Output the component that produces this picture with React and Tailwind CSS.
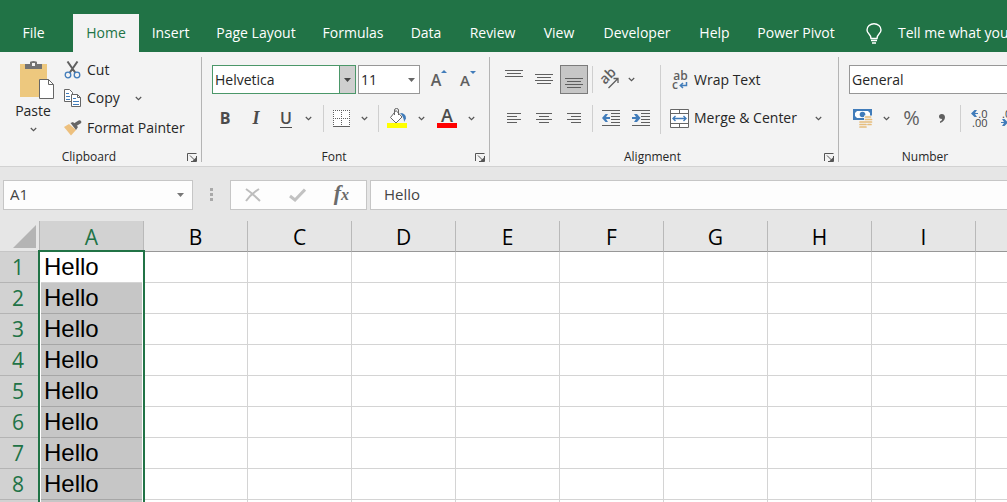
import React, { useState } from 'react';

const tabs = [
  { name: 'Insert', width: 'w-[63px]' },
  { name: 'Page Layout', width: 'w-[108px]' },
  { name: 'Formulas', width: 'w-[86px]' },
  { name: 'Data', width: 'w-[60px]' },
  { name: 'Review', width: 'w-[73px]' },
  { name: 'View', width: 'w-[60px]' },
  { name: 'Developer', width: 'w-[96px]' },
  { name: 'Help', width: 'w-[59px]' },
  { name: 'Power Pivot', width: 'w-[104px]' },
];

const columns = ['A', 'B', 'C', 'D', 'E', 'F', 'G', 'H', 'I', 'J'];
const rows = [1, 2, 3, 4, 5, 6, 7, 8, 9];

function Chevron() {
  return (
    <svg className="shrink-0" width="7" height="5" viewBox="0 0 7 5" fill="none" stroke="#555" strokeWidth="1.2">
      <path d="M.8 1l2.700 2.600L6.200 1" />
    </svg>
  );
}

function Triangle({ color = '#666' }) {
  return (
    <svg width="7" height="4" viewBox="0 0 7 4" fill={color}>
      <path d="M0 0h7L3.500 4z" />
    </svg>
  );
}

function MoreButton({ label, width = 'w-5' }) {
  return (
    <button aria-label={label} className={`flex h-[30px] shrink-0 items-center justify-center ${width}`}>
      <Chevron />
    </button>
  );
}

function IconButton({ label, width = 'w-[30px]', children }) {
  return (
    <button aria-label={label} className={`flex h-[30px] shrink-0 items-center justify-center ${width}`}>
      {children}
    </button>
  );
}

function Separator() {
  return <div className="h-[27px] w-px shrink-0 bg-[#cfcfcf]" />;
}

// horizontal strokes, each one is [x, y, length]
function Lines({ width = 18, height = 18, lines, children }) {
  return (
    <svg width={width} height={height} viewBox={`0 0 ${width} ${height}`} fill="#5f5f5f">
      {lines.map(([x, y, w]) => (
        <rect key={`${x}-${y}`} x={x} y={y} width={w} height="1" />
      ))}
      {children}
    </svg>
  );
}

function Launcher({ label }) {
  return (
    <button aria-label={label} className="flex h-3 w-3 items-center justify-center">
      <svg width="10" height="9" viewBox="0 0 10 9" fill="none" stroke="#555">
        <path d="M.5 8V.5H9.500M3 2.500l5 5M9.500 3v5.500H4" />
        <path d="M9 4.500V8H5.500z" fill="#555" stroke="none" />
      </svg>
    </button>
  );
}

function Group({ title, width, launcher = true, children }) {
  return (
    <section
      aria-label={title}
      className={`flex h-[105px] shrink-0 flex-col justify-between border-r border-[#b4b4b4] ${width}`}
    >
      {children}
      <div className="flex h-[10px] items-center pr-[3px] text-xs text-[#262626]">
        <span className="flex-1 pr-2 text-center">{title}</span>
        {launcher ? <Launcher label={`${title} settings`} /> : <span className="w-3" />}
      </div>
    </section>
  );
}

function PasteIcon() {
  return (
    <svg width="36" height="38" viewBox="0 0 36 38">
      <path d="M1 3h27v33H1z" fill="#edc87e" />
      <path d="M6 3h5V1.500q0-1.500 3.500-1.500T18 1.500V3h5v5H6z" fill="#737373" />
      <rect x="13" y="2" width="3" height="3" fill="#f3f3f3" />
      <path d="M20.500 18.500h9l5 5v14h-14z" fill="#fff" stroke="#666" />
      <path d="M29.500 18.500v5h5" fill="none" stroke="#666" />
    </svg>
  );
}

function CutIcon() {
  return (
    <svg width="18" height="18" viewBox="0 0 18 18" fill="none">
      <path d="M3.500.5l8 11.500M13.500.5l-8 11.500" stroke="#606060" strokeWidth="2" />
      <circle cx="4" cy="14" r="2.800" stroke="#417cba" strokeWidth="1.300" />
      <circle cx="13" cy="14" r="2.800" stroke="#417cba" strokeWidth="1.300" />
    </svg>
  );
}

function CopyIcon() {
  return (
    <svg width="18" height="18" viewBox="0 0 18 18" fill="#fff" stroke="#666">
      <path d="M.5.5h5l3 3v9h-8z" />
      <path d="M2 4.500h3M2 7.500h4M2 10.500h4" stroke="#417cba" />
      <path d="M7.500 5.500h6l3 3v9h-9z" />
      <path d="M13.500 5.500v3h3" fill="none" />
      <path d="M9 9.500h3M9 12.500h6M9 15.500h6" stroke="#417cba" />
    </svg>
  );
}

function PainterIcon() {
  return (
    <svg width="18" height="16" viewBox="0 0 18 16">
      <path d="M0 7l5-3 7 6-5 5.500z" fill="#edc07e" />
      <path d="M6.500 3l2.500-1 5 5-2 3z" fill="#666" />
      <path d="M11.500 4.500L15.500 2" stroke="#666" strokeWidth="3.500" strokeLinecap="round" />
    </svg>
  );
}

function GrowShrink({ shrink }) {
  return (
    <span className="flex items-start text-[#5f5f5f]">
      <span className={`font-semibold leading-5 ${shrink ? 'text-[15px]' : 'text-base'}`}>A</span>
      <svg width="6" height="4" viewBox="0 0 6 4" fill="#417cba">
        <path d={shrink ? 'M0 1h6L3 4z' : 'M0 3h6L3 0z'} />
      </svg>
    </span>
  );
}

function BordersIcon() {
  return (
    <svg width="17" height="17" viewBox="0 0 17 17" fill="none" stroke="#5f5f5f">
      <path d="M0 0h17v17H0z" fill="#fff" stroke="none" />
      <path d="M0 .5h17M0 8.500h17M.5 0v16M8.500 0v16M16.500 0v16" strokeDasharray="1 1" />
      <path d="M0 16.500h17" />
    </svg>
  );
}

function FillIcon() {
  return (
    <svg width="20" height="20" viewBox="0 0 20 20" fill="none">
      <path d="M9 2.500L15 9l-6 6L3.500 9.500z" fill="#fff" stroke="#666" />
      <path d="M7.500 7V2Q7.500.5 9.500.5T11.500 2v5" stroke="#666" />
      <path d="M13 5q6 0 6 5.500L17 14q0-5-4-9z" fill="#417cba" />
      <path d="M0 15h20v5H0z" fill="#ff0" />
    </svg>
  );
}

function OrientationIcon() {
  return (
    <svg className="overflow-visible" width="20" height="18" viewBox="0 0 20 18" fill="none" stroke="#5f5f5f">
      <text x="5" y="14" transform="rotate(-45 5 14)" fill="#5f5f5f" stroke="none" fontSize="14" fontWeight="600">
        ab
      </text>
      <path d="M8.500 17L18 7.500M13.500 7.500H18V12" strokeWidth="1.300" />
    </svg>
  );
}

function IndentIcon({ increase }) {
  return (
    <Lines lines={[[0, 1, 18], [9, 4, 9], [9, 7, 9], [9, 10, 9], [9, 13, 9], [0, 16, 18]]}>
      <path
        d={increase ? 'M0 8h4L2 5h3l3.500 4L5 13H2l2-3H0z' : 'M8 8H4l2-3H3.500L0 9l3.500 4H6l-2-3h4z'}
        fill="#417cba"
      />
    </Lines>
  );
}

function WrapIcon() {
  return (
    <span className="flex w-[17px] flex-col text-xs leading-[9px] font-semibold text-[#5f5f5f]">
      <span>ab</span>
      <span className="flex items-end gap-px">
        c
        <svg width="9" height="7" viewBox="0 0 9 7" fill="none" stroke="#417cba" strokeWidth="1.5">
          <path d="M7.500 0v3.500H1.500M4 1L1.300 3.500 4 6" />
        </svg>
      </span>
    </span>
  );
}

function MergeIcon() {
  return (
    <svg width="19" height="19" viewBox="0 0 19 19" fill="none" stroke="#666">
      <path d="M.5.5h18v18H.5z" fill="#fff" />
      <path d="M0 4.500h19M0 14.500h19M9.500 0v4.500M9.500 14.500V19" />
      <path d="M3 9.500h13M5.500 7L3 9.500 5.500 12M13.500 7L16 9.500 13.500 12" stroke="#417cba" strokeWidth="1.400" />
    </svg>
  );
}

function MoneyIcon() {
  return (
    <svg width="20" height="19" viewBox="0 0 20 19" fill="none">
      <path d="M0 0h19v11H0z" fill="#417cba" />
      <path d="M4 2h11l2 2v3l-2 2H4L2 7V4z" fill="#fff" />
      <circle cx="9.500" cy="5.500" r="2.800" fill="#417cba" />
      <path d="M11 6.500h8v9h-8zM5 11.500h9V19H5z" fill="#f3f3f3" />
      <path d="M12.500 8h5M12.500 10.500h6M12.500 13h6M15 15.500h3M7 13h5M7 15.500h6M7 18h6" stroke="#e6bd7c" strokeWidth="1.700" strokeLinecap="round" />
    </svg>
  );
}

function DecimalIcon({ decrease }) {
  const arrow = (
    <svg width="7" height="7" viewBox="0 0 7 7" fill="#417cba">
      <path d={decrease ? 'M0 3h3L1 0h2.500L7 3.500 3.500 7H1l2-3H0z' : 'M7 3H4l2-3H3.500L0 3.500 3.500 7H6L4 4h3z'} />
    </svg>
  );

  return (
    <span className="flex w-[15px] flex-col items-end text-[11px] leading-[9px] text-[#444]">
      <span className="flex items-center">{decrease ? '.00' : <>{arrow}.0</>}</span>
      <span className="flex items-center">{decrease ? <>{arrow}.0</> : '.00'}</span>
    </span>
  );
}

function BulbIcon() {
  return (
    <svg width="16" height="21" viewBox="0 0 16 21" fill="none" stroke="#fff" strokeWidth="1.400">
      <path d="M5 15.500q0-2.500-2-4.500Q1 9 1 7a7 6.300 0 0114 0q0 2-2 4t-2 4.500zM5 17.500h6M6 20h4" />
    </svg>
  );
}

function TabBar() {
  return (
    <header className="flex h-[52px] items-end overflow-hidden bg-[#217346] text-sm whitespace-nowrap text-white">
      <button className="mr-[6px] h-[38px] w-[67px] shrink-0">File</button>
      <button className="h-[38px] w-[66px] shrink-0 bg-[#f3f3f3] text-[#217346]">Home</button>
      {tabs.map((tab) => (
        <button key={tab.name} className={`h-[38px] shrink-0 ${tab.width}`}>
          {tab.name}
        </button>
      ))}
      <button className="flex h-[38px] shrink-0 items-center gap-4 pl-[18px]">
        <BulbIcon />
        Tell me what you want to do
      </button>
    </header>
  );
}

function ClipboardGroup() {
  return (
    <Group title="Clipboard" width="w-[202px]">
      <div className="flex">
        <button className="flex h-[87px] w-[64px] flex-col items-center pt-1 pl-[2px]">
          <span className="pl-2"><PasteIcon /></span>
          <span className="mt-[2px] leading-5">Paste</span>
          <span className="mt-[6px]"><Chevron /></span>
        </button>
        <div className="flex flex-col">
          <button className="flex h-[26px] items-center gap-[5px]">
            <CutIcon />
            Cut
          </button>
          <div className="flex h-[30px] items-center">
            <button className="flex items-center gap-[5px]">
              <CopyIcon />
              Copy
            </button>
            <MoreButton label="Copy options" width="ml-[9px] w-5" />
          </div>
          <button className="flex h-[29px] items-center gap-[5px]">
            <PainterIcon />
            Format Painter
          </button>
        </div>
      </div>
    </Group>
  );
}

function FontGroup() {
  const [font, setFont] = useState('Helvetica');
  const [size, setSize] = useState('11');

  return (
    <Group title="Font" width="w-[288px]">
      <div className="flex flex-col gap-[9px] pt-2 pl-[10px]">
        <div className="flex h-[29px] items-center">
          <div className="flex h-[29px] w-[144px] border border-[#4b9769] bg-white">
            <input
              aria-label="Font name"
              className="w-0 flex-1 pl-[2px] text-[#262626] outline-none"
              value={font}
              onChange={(e) => setFont(e.target.value)}
            />
            <button aria-label="Font list" className="flex w-4 items-center justify-center border-l border-[#4b9769] bg-[#cfcfcf]">
              <Triangle color="#444" />
            </button>
          </div>
          <div className="ml-[2px] flex h-[29px] w-[62px] border border-[#979797] bg-white">
            <input
              aria-label="Font size"
              className="w-0 flex-1 pl-[2px] text-[#262626] outline-none"
              value={size}
              onChange={(e) => setSize(e.target.value)}
            />
            <button aria-label="Size list" className="flex w-4 items-center justify-center">
              <Triangle />
            </button>
          </div>
          <IconButton label="Increase font size" width="ml-1 w-[30px]">
            <GrowShrink />
          </IconButton>
          <IconButton label="Decrease font size" width="w-7">
            <GrowShrink shrink />
          </IconButton>
        </div>
        <div className="flex h-[30px] items-center text-[#4b4b4b]">
          <IconButton label="Bold" width="w-[26px]">
            <span className="text-base font-bold">B</span>
          </IconButton>
          <IconButton label="Italic" width="w-9">
            <span className="font-['Liberation_Serif',serif] text-lg font-bold italic">I</span>
          </IconButton>
          <IconButton label="Underline" width="w-6">
            <span className="border-b border-[#4b4b4b] text-base leading-[18px] font-semibold">U</span>
          </IconButton>
          <MoreButton label="Underline options" width="mr-1 w-[21px]" />
          <Separator />
          <IconButton label="Borders" width="w-[34px]">
            <BordersIcon />
          </IconButton>
          <MoreButton label="Border options" width="mr-[7px] w-[13px]" />
          <Separator />
          <IconButton label="Fill color" width="w-9">
            <FillIcon />
          </IconButton>
          <MoreButton label="Fill options" width="w-3" />
          <IconButton label="Font color" width="w-10">
            <span className="flex w-5 flex-col items-center">
              <span className="text-lg leading-[15px] font-semibold">A</span>
              <span className="h-[5px] w-5 bg-[#ff0000]" />
            </span>
          </IconButton>
          <MoreButton label="Font color options" width="w-2" />
        </div>
      </div>
    </Group>
  );
}

function AlignmentGroup() {
  return (
    <Group title="Alignment" width="w-[349px]">
      <div className="flex pt-2 pl-[9px]">
        <div className="flex w-[161px] flex-col gap-[9px]">
          <div className="flex h-[29px] items-center">
            <IconButton label="Top align">
              <Lines height={24} lines={[[0, 2, 18], [2, 5, 14], [0, 8, 18]]} />
            </IconButton>
            <IconButton label="Middle align">
              <Lines height={24} lines={[[0, 6, 18], [2, 9, 14], [0, 12, 18], [2, 15, 14]]} />
            </IconButton>
            <button aria-label="Bottom align" className="ml-[1px] flex h-[29px] w-7 items-center justify-center border border-[#7b7b7b] bg-[#c6c6c6]">
              <Lines height={24} lines={[[0, 10, 18], [2, 13, 14], [0, 16, 18], [2, 19, 14]]} />
            </button>
            <div className="ml-1">
              <Separator />
            </div>
            <IconButton label="Orientation" width="w-[34px]">
              <OrientationIcon />
            </IconButton>
            <MoreButton label="Orientation options" width="w-2" />
          </div>
          <div className="flex h-[30px] items-center">
            <IconButton label="Align left">
              <Lines width={14} lines={[[0, 4, 14], [0, 7, 10], [0, 10, 14], [0, 13, 10]]} />
            </IconButton>
            <IconButton label="Center">
              <Lines width={16} lines={[[0, 4, 16], [3, 7, 10], [0, 10, 16], [3, 13, 10]]} />
            </IconButton>
            <IconButton label="Align right">
              <Lines width={14} lines={[[0, 4, 14], [4, 7, 10], [0, 10, 14], [4, 13, 10]]} />
            </IconButton>
            <div className="ml-[3px]">
              <Separator />
            </div>
            <IconButton label="Decrease indent" width="ml-[3px] w-[30px]">
              <IndentIcon />
            </IconButton>
            <IconButton label="Increase indent">
              <IndentIcon increase />
            </IconButton>
          </div>
        </div>
        <div className="h-[69px] w-px bg-[#cfcfcf]" />
        <div className="flex flex-1 flex-col gap-[9px] pl-[9px]">
          <button className="flex h-[29px] items-center gap-[5px] pl-[2px]">
            <WrapIcon />
            Wrap Text
          </button>
          <div className="flex h-[30px] items-center">
            <button className="flex items-center gap-[5px]">
              <MergeIcon />
              Merge &amp; Center
            </button>
            <MoreButton label="Merge options" width="ml-3 w-5" />
          </div>
        </div>
      </div>
    </Group>
  );
}

function NumberGroup() {
  return (
    <Group title="Number" width="w-[196px]" launcher={false}>
      <div className="flex flex-col gap-[9px] pt-2 pl-[10px]">
        <select
          aria-label="Number format"
          className="h-[29px] w-[170px] appearance-none border border-[#979797] bg-white pl-[2px] text-[#262626]"
        >
          <option>General</option>
          <option>Number</option>
          <option>Currency</option>
        </select>
        <div className="flex h-[30px] items-center text-[#5f5f5f]">
          <IconButton label="Accounting format" width="w-7">
            <MoneyIcon />
          </IconButton>
          <MoreButton label="Accounting options" width="w-[18px]" />
          <IconButton label="Percent style" width="w-[33px]">
            <span className="text-xl">%</span>
          </IconButton>
          <IconButton label="Comma style" width="w-7">
            <svg width="6" height="9" viewBox="0 0 6 9" fill="#5f5f5f">
              <path d="M0 2.500Q0 0 2.800 0T6 3q0 4-5 6V7.500Q3 6.500 3.200 5 0 5 0 2.500z" />
            </svg>
          </IconButton>
          <div className="ml-1">
            <Separator />
          </div>
          <IconButton label="Increase decimal" width="ml-1 w-[30px]">
            <DecimalIcon />
          </IconButton>
          <IconButton label="Decrease decimal">
            <DecimalIcon decrease />
          </IconButton>
        </div>
      </div>
    </Group>
  );
}

function FormulaBar() {
  const [formula, setFormula] = useState('Hello');

  return (
    <div className="flex h-[54px] items-center pt-[1px] pl-[3px] text-[#444]">
      <div className="flex h-[30px] w-[190px] shrink-0 items-center border border-[#c6c6c6] bg-[#fdfdfd] pr-2">
        <input
          aria-label="Name box"
          className="w-0 flex-1 pb-[2px] pl-[6px] text-[15px] leading-5 outline-none"
          defaultValue="A1"
        />
        <button aria-label="Named ranges">
          <Triangle color="#777" />
        </button>
      </div>
      <div className="flex w-[37px] shrink-0 flex-col items-center gap-[2px]">
        <span className="h-[3px] w-[3px] bg-[#a9a9a9]" />
        <span className="h-[3px] w-[3px] bg-[#a9a9a9]" />
        <span className="h-[3px] w-[3px] bg-[#a9a9a9]" />
      </div>
      <div className="flex h-[30px] w-[137px] shrink-0 items-center justify-around border border-[#c6c6c6] bg-[#fdfdfd]">
        <button aria-label="Cancel">
          <svg width="16" height="14" viewBox="0 0 16 14" fill="none" stroke="#bdbdbd" strokeWidth="2">
            <path d="M1 1q6 4 14 12M14 1Q6 6 1 13" />
          </svg>
        </button>
        <button aria-label="Enter">
          <svg width="17" height="14" viewBox="0 0 17 14" fill="none" stroke="#c2c2c2" strokeWidth="3">
            <path d="M1 8l5 4L16 1.500" />
          </svg>
        </button>
        <button
          aria-label="Insert function"
          className="pr-[3px] pb-[2px] font-['Liberation_Serif',serif] text-[22px] leading-6 font-bold text-[#6b6b6b] italic"
        >
          f<span className="text-base">x</span>
        </button>
      </div>
      <input
        aria-label="Formula"
        className="ml-[3px] h-[30px] min-w-0 flex-1 border border-r-0 border-[#c6c6c6] bg-[#fdfdfd] pb-[2px] pl-[13px] text-[15px] outline-none"
        value={formula}
        onChange={(e) => setFormula(e.target.value)}
      />
    </div>
  );
}

function Sheet() {
  return (
    <div className="relative flex-1 overflow-hidden bg-white">
      <table className="w-[1080px] table-fixed border-separate border-spacing-0">
        <colgroup>
          <col className="w-10" />
          {columns.map((col) => (
            <col key={col} className="w-[104px]" />
          ))}
        </colgroup>
        <thead>
          <tr className="h-[31px] text-[21px] leading-7">
            <th aria-label="Select all" className="border-r border-b border-r-[#b4b4b4] border-b-[#c6c6c6] bg-[#e6e6e6] p-0">
              <svg className="ml-[13px]" width="23" height="23" viewBox="0 0 23 23" fill="#b4b4b4">
                <path d="M23 0v23H0z" />
              </svg>
            </th>
            {columns.map((col) => (
              <th
                key={col}
                scope="col"
                className={`border-r border-b border-r-[#b9b9b9] border-b-[#979797] p-0 pt-[2px] font-normal ${
                  col === 'A' ? 'bg-[#d2d2d2] text-[#217346]' : 'bg-[#e6e6e6] text-black'
                }`}
              >
                {col}
              </th>
            ))}
          </tr>
        </thead>
        <tbody>
          {rows.map((row) => (
            <tr key={row} className="h-[31px]">
              <th
                scope="row"
                className="border-r border-b border-[#b4b4b4] bg-[#d2d2d2] p-0 pr-[3px] text-[21px] leading-7 font-normal text-[#217346]"
              >
                {row}
              </th>
              {columns.map((col) => (
                <td
                  key={col}
                  className={`border-r border-b p-0 pl-1 font-['Liberation_Sans',Arial,sans-serif] text-2xl leading-[30px] text-black ${
                    col === 'A' && row > 1 ? 'border-[#a6a6a6] bg-[#c6c6c6]' : 'border-[#d4d4d4] bg-white'
                  }`}
                >
                  {col === 'A' ? 'Hello' : ''}
                </td>
              ))}
            </tr>
          ))}
        </tbody>
      </table>
      {/* selection frame */}
      <div className="pointer-events-none absolute top-[29px] -bottom-1 left-[38px] w-[107px] border-2 border-[#217346]">
        <div className="h-full border-x border-white" />
      </div>
    </div>
  );
}

export default function App() {
  return (
    <div className="flex h-screen flex-col overflow-hidden bg-[#e6e6e6] font-['Open_Sans','Noto_Sans',sans-serif]">
      <TabBar />
      <div className="flex overflow-hidden border-b border-[#d2d2d2] bg-[#f3f3f3] pt-[5px] pb-1 text-sm whitespace-nowrap text-[#262626]">
        <ClipboardGroup />
        <FontGroup />
        <AlignmentGroup />
        <NumberGroup />
      </div>
      <FormulaBar />
      <Sheet />
    </div>
  );
}
